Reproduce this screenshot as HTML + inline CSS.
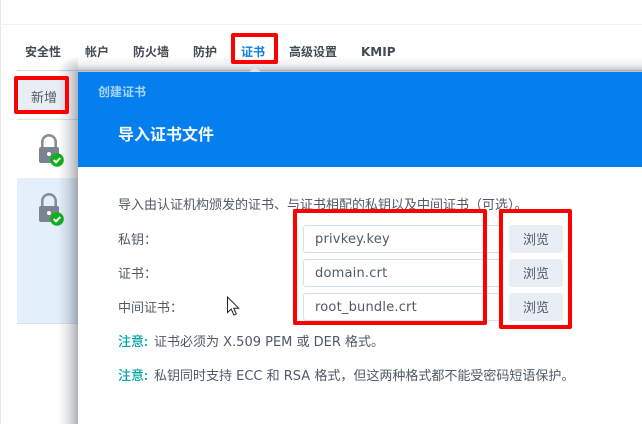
<!DOCTYPE html>
<html><head><meta charset="utf-8">
<style>
*{box-sizing:border-box}
html,body{margin:0;padding:0;width:642px;height:424px;overflow:hidden;background:#fff}
body{position:relative;font-family:"Liberation Sans","Noto Sans CJK SC",sans-serif;font-size:13px;color:#4a5563}
.a{position:absolute;white-space:nowrap;line-height:16px}
.tab{top:44px;font-weight:bold;color:#414b55;font-size:12px}
.lab{left:118px;font-size:13px;color:#4e5a66}
.inp{position:absolute;left:303px;width:198px;height:28px;border:1px solid #d5dfe9;border-radius:3px;background:#fff;padding-left:11px;line-height:27px;font-family:"DejaVu Sans",sans-serif;font-size:13px;letter-spacing:.2px;color:#4e5a66;white-space:nowrap}
.btn{position:absolute;left:509px;width:54px;height:28px;background:#e9edf4;border-radius:3px;text-align:center;line-height:29px;font-size:13px;color:#4e5a66}
.red{position:absolute;border:4px solid #fe0000;border-radius:2px}
.note{left:118px;font-size:13px;color:#4e5a66;font-family:"DejaVu Sans","Noto Sans CJK SC",sans-serif}
.note b{font-weight:500;color:#00a5a5;font-family:"Noto Sans CJK SC",sans-serif;margin-right:2px}
</style></head><body>
<div style="position:absolute;left:0;top:0;width:1px;height:424px;background:#dfe8f3"></div>
<div style="position:absolute;left:0;top:24px;width:642px;height:1px;background:#eef1f6"></div>

<div class="a tab" style="left:25px">安全性</div>
<div class="a tab" style="left:85px">帐户</div>
<div class="a tab" style="left:133px">防火墙</div>
<div class="a tab" style="left:193px">防护</div>
<div class="a tab" style="left:241px;color:#0a7fe8">证书</div>
<div class="a tab" style="left:289px">高级设置</div>
<div class="a tab" style="left:361px;font-family:'DejaVu Sans',sans-serif;font-size:12px">KMIP</div>
<div style="position:absolute;left:17px;top:70px;width:625px;height:1px;background:#d5dbe3"></div>

<div style="position:absolute;left:17px;top:119px;width:61px;height:1px;background:#dde3ea"></div>
<div style="position:absolute;left:17px;top:178px;width:61px;height:146px;background:#e3effb;border-bottom:1px solid #d8e2ee"></div>

<svg style="position:absolute;left:36px;top:132px" width="30" height="38" viewBox="0 0 30 38">
<path d="M6.300 16V10a6.700 6.700 0 0 1 13.400 0V16" fill="none" stroke="#868e98" stroke-width="2.600"/>
<rect x="3" y="15" width="20" height="16" rx="2" fill="#7b838e"/>
<circle cx="13" cy="22" r="2" fill="#fff"/>
<circle cx="21" cy="28" r="6.800" fill="#0fb01c"/>
<path d="M17.700 28l2.300 2.300 4.300-4.300" fill="none" stroke="#fff" stroke-width="2"/>
</svg>
<svg style="position:absolute;left:36px;top:191px" width="30" height="38" viewBox="0 0 30 38">
<path d="M6.300 16V10a6.700 6.700 0 0 1 13.400 0V16" fill="none" stroke="#868e98" stroke-width="2.600"/>
<rect x="3" y="15" width="20" height="16" rx="2" fill="#7b838e"/>
<circle cx="13" cy="22" r="2" fill="#fff"/>
<circle cx="21" cy="28" r="6.800" fill="#0fb01c"/>
<path d="M17.700 28l2.300 2.300 4.300-4.300" fill="none" stroke="#fff" stroke-width="2"/>
</svg>

<div style="position:absolute;left:17px;top:79px;width:50px;height:33px;background:#e9edf4"></div>
<div class="a" style="left:31px;top:90px;font-size:13px;color:#4e5a66">新增</div>

<div style="position:absolute;left:58px;top:72px;width:20px;height:352px;background:linear-gradient(to right,rgba(30,40,60,0),rgba(30,40,60,.12) 50%,rgba(30,40,60,.36))"></div>
<div style="position:absolute;left:78px;top:56px;width:564px;height:16px;background:linear-gradient(to bottom,rgba(30,40,60,0),rgba(30,40,60,.06) 50%,rgba(30,40,60,.3))"></div>
<div style="position:absolute;left:58px;top:56px;width:20px;height:16px;background:radial-gradient(ellipse 20px 16px at 100% 100%,rgba(30,40,60,.3),rgba(30,40,60,0))"></div>

<div style="position:absolute;left:78px;top:72px;width:564px;height:352px;background:#fff">
<div style="position:absolute;left:0;top:0;width:100%;height:95px;background:#067fee"></div>
</div>
<div style="position:absolute;left:249px;top:67px;width:0;height:0;border-left:6px solid transparent;border-right:6px solid transparent;border-bottom:5px solid #dfe3e8"></div>
<div class="a" style="left:98px;top:84px;font-size:12px;color:#a9d4fa;font-weight:bold">创建证书</div>
<div class="a" style="left:118px;top:126px;font-size:16px;line-height:20px;color:#f4f9ff;font-weight:bold">导入证书文件</div>

<div class="a lab" style="top:197px">导入由认证机构颁发的证书、与证书相配的私钥以及中间证书（可选）。</div>
<div class="a lab" style="top:232px">私钥：</div>
<div class="a lab" style="top:266px">证书：</div>
<div class="a lab" style="top:300px">中间证书：</div>

<div class="inp" style="top:225px">privkey.key</div>
<div class="inp" style="top:259px">domain.crt</div>
<div class="inp" style="top:293px">root_bundle.crt</div>
<div class="btn" style="top:225px">浏览</div>
<div class="btn" style="top:259px">浏览</div>
<div class="btn" style="top:293px">浏览</div>

<div class="a note" style="top:333px"><b>注意:</b> 证书必须为 X.509 PEM 或 DER 格式。</div>
<div class="a note" style="top:367px"><b>注意:</b> 私钥同时支持 ECC 和 RSA 格式，但这两种格式都不能受密码短语保护。</div>

<svg style="position:absolute;left:226px;top:296px" width="16" height="22" viewBox="0 0 16 22"><path d="M1.500 1v15.500l3.700-3.400 2.600 5.900 2.500-1.100-2.600-5.700h5z" fill="#fff" stroke="#222" stroke-width="1"/></svg>

<div class="red" style="left:231px;top:33px;width:47px;height:31px"></div>
<div class="red" style="left:14px;top:76px;width:55px;height:38px"></div>
<div class="red" style="left:293px;top:209px;width:194px;height:116px"></div>
<div class="red" style="left:499px;top:209px;width:73px;height:120px"></div>
</body></html>
